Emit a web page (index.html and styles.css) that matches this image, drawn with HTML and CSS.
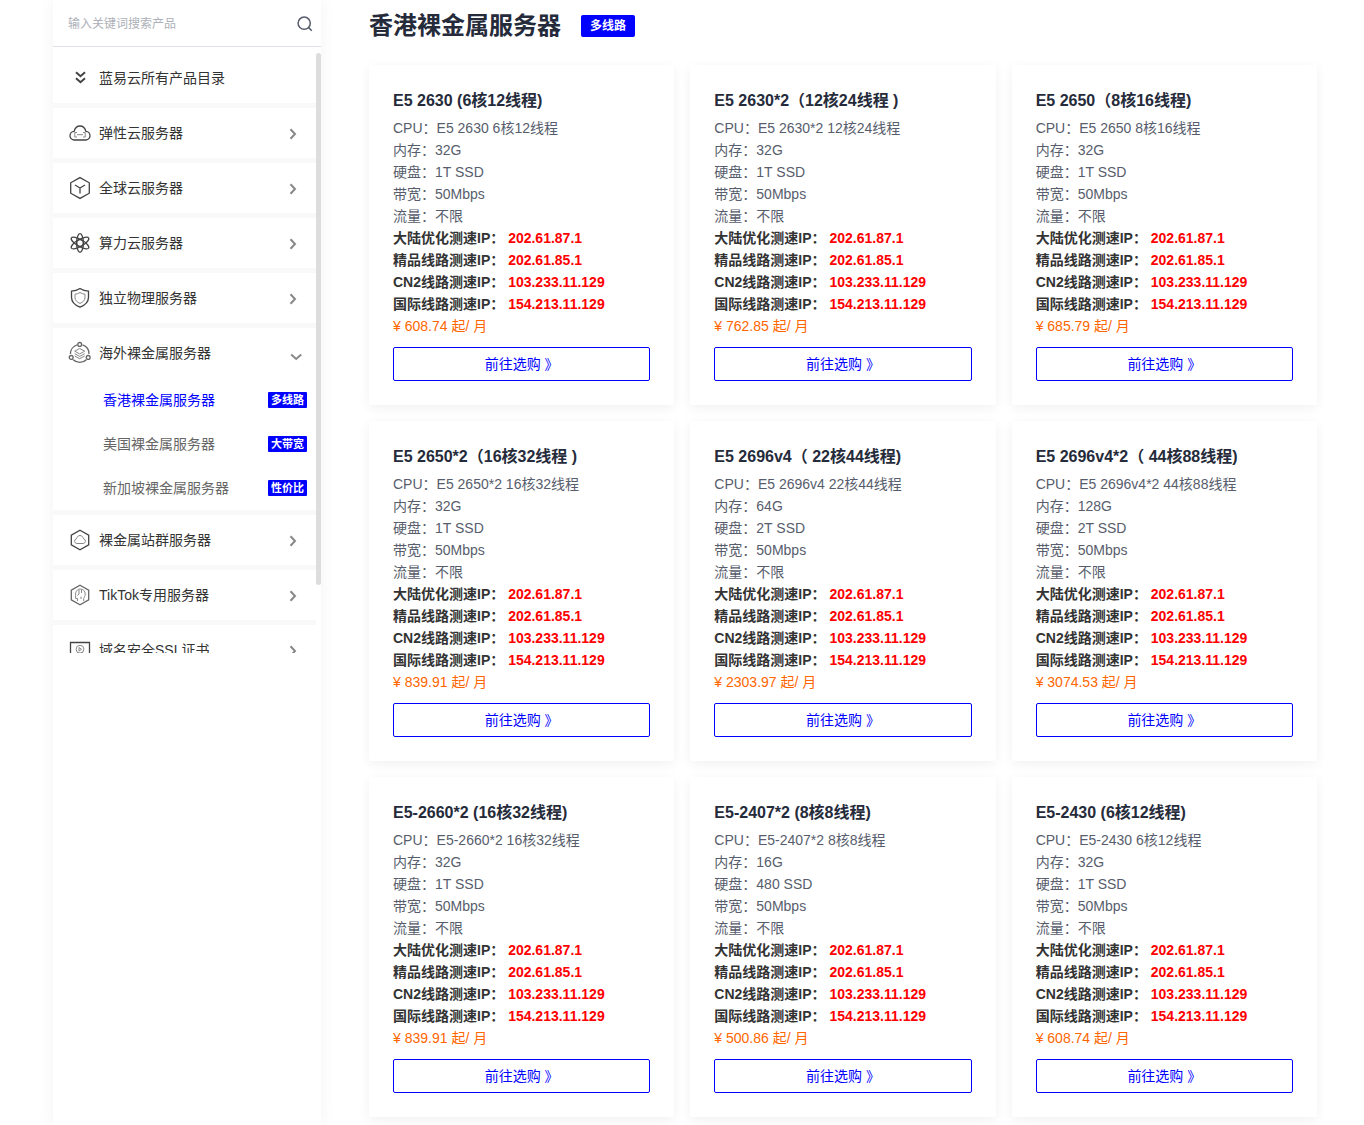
FILE: index.html
```html
<!DOCTYPE html>
<html lang="zh-CN">
<head>
<meta charset="utf-8">
<meta name="viewport" content="width=device-width, initial-scale=1">
<title>香港裸金属服务器</title>
<link rel="stylesheet" href="styles.css">
</head>
<body>
<div class="page">
  <aside class="sidebar">
    <form class="search">
      <input class="search-input" type="search" placeholder="输入关键词搜索产品" aria-label="输入关键词搜索产品">
      <button class="search-button" type="submit" aria-label="搜索">
        <svg width="16" height="16" viewBox="0 0 16 16"><circle cx="7.2" cy="7.2" r="6.1"/><path d="M11.6 11.6l3.2 3.2"/></svg>
      </button>
    </form>
    <div class="menu-frame">
    <nav class="menu">
      <div class="group">
        <a class="row" href="#">
          <svg class="icon icon-bold" viewBox="0 0 24 24"><path d="M8 6.2l4.5 4 4.5-4M8 12.2l4.5 4 4.5-4"/></svg>
          <span class="label">蓝易云所有产品目录</span>
        </a>
      </div>
      <div class="group">
        <button class="row" type="button">
          <svg class="icon" viewBox="0 0 24 24"><path d="M6.500 19a4.300 4.300 0 0 1-.4-8.600C7 7 9.200 5 12 5s5 2 5.900 5.400a4.300 4.300 0 0 1-.4 8.600z"/><path class="thin" d="M9 11.500H6.800V16H9M15 11.500h2.200V16H15M9 13.700h6"/></svg>
          <span class="label">弹性云服务器</span>
          <svg class="arrow" viewBox="0 0 20 20"><path d="M4.500 6.200L9 11l-4.500 4.800"/></svg>
        </button>
      </div>
      <div class="group">
        <button class="row" type="button">
          <svg class="icon" viewBox="0 0 24 24"><path d="M12 1.600l9.300 5.200v10.400L12 22.400l-9.300-5.200V6.800z"/><path d="M12 17.500V12L7 9M12 12l5-3"/></svg>
          <span class="label">全球云服务器</span>
          <svg class="arrow" viewBox="0 0 20 20"><path d="M4.500 6.200L9 11l-4.500 4.800"/></svg>
        </button>
      </div>
      <div class="group">
        <button class="row" type="button">
          <svg class="icon" viewBox="0 0 24 24"><ellipse cx="12" cy="12" rx="3.400" ry="9.300"/><ellipse cx="12" cy="12" rx="3.400" ry="10" transform="rotate(60 12 12)"/><ellipse cx="12" cy="12" rx="3.400" ry="10" transform="rotate(-60 12 12)"/><circle cx="12" cy="12" r="3.400"/></svg>
          <span class="label">算力云服务器</span>
          <svg class="arrow" viewBox="0 0 20 20"><path d="M4.500 6.200L9 11l-4.500 4.800"/></svg>
        </button>
      </div>
      <div class="group">
        <button class="row" type="button">
          <svg class="icon" viewBox="0 0 24 24"><path d="M12 2.500c2.600 1.700 5.400 2.500 8.500 2.700v6c0 4.600-3.200 7.800-8.500 10-5.300-2.200-8.500-5.400-8.500-10v-6C6.600 5 9.400 4.200 12 2.500z"/><path class="thin" d="M12 6.500c1.600 1 3.200 1.500 5 1.700v3.300c0 2.600-1.800 4.500-5 6-3.200-1.500-5-3.400-5-6V8.200c1.800-.2 3.400-.7 5-1.700z"/></svg>
          <span class="label">独立物理服务器</span>
          <svg class="arrow" viewBox="0 0 20 20"><path d="M4.500 6.200L9 11l-4.500 4.800"/></svg>
        </button>
      </div>
      <div class="group">
        <button class="row" type="button" aria-expanded="true">
          <svg class="icon" viewBox="0 0 24 24"><path class="mid" d="M9.200 3.800A9.500 9.500 0 0 0 2.400 13M14.500 3.800a9.500 9.500 0 0 1 6.500 9.200M5.200 18.800a9.500 9.500 0 0 0 13.200 0"/><circle class="mid" cx="11.700" cy="3.400" r="1.900"/><circle class="mid" cx="3.200" cy="16.400" r="1.900"/><circle class="mid" cx="20.200" cy="16.400" r="1.900"/><path class="thin" d="M11.700 7.500l5 2.700-5 2.700-5-2.700zM6.700 12.700l5 2.700 5-2.700M6.700 15l5 2.700 5-2.700"/></svg>
          <span class="label">海外裸金属服务器</span>
          <svg class="arrow" viewBox="0 0 20 20"><path d="M5.200 11.500l5 4.500 5-4.500"/></svg>
        </button>
        <a class="subrow current" href="#" aria-current="page">香港裸金属服务器<span class="tag">多线路</span></a>
        <a class="subrow" href="#">美国裸金属服务器<span class="tag">大带宽</span></a>
        <a class="subrow" href="#">新加坡裸金属服务器<span class="tag">性价比</span></a>
      </div>
      <div class="group">
        <button class="row" type="button">
          <svg class="icon" viewBox="0 0 24 24"><path d="M12 2.300l8.700 4.800v9.800L12 21.700l-8.700-4.800V7.100z"/><path class="thin" d="M8.800 15.500a2.400 2.400 0 0 1-.4-4.700C9 8.600 10.400 7.500 12 7.500s3 1.100 3.600 3.300a2.400 2.400 0 0 1-.4 4.700z"/></svg>
          <span class="label">裸金属站群服务器</span>
          <svg class="arrow" viewBox="0 0 20 20"><path d="M4.500 6.200L9 11l-4.500 4.800"/></svg>
        </button>
      </div>
      <div class="group">
        <button class="row" type="button">
          <svg class="icon" viewBox="0 0 24 24"><path class="mid" d="M12 2.300l8.700 4.800v9.800L12 21.700l-8.700-4.800V7.100z"/><path class="thin" d="M9.500 18v-2.500H7.600v-3.200C7.300 8.500 9.300 6 12.300 6s4.900 2.200 4.900 5c0 2.200-1 3-1.500 4.500V18M11 6.500V11l-1.500 1.500M13.500 6.500V10M13 13.500V16"/></svg>
          <span class="label">TikTok专用服务器</span>
          <svg class="arrow" viewBox="0 0 20 20"><path d="M4.500 6.200L9 11l-4.500 4.800"/></svg>
        </button>
      </div>
      <div class="group">
        <button class="row" type="button">
          <svg class="icon" viewBox="0 0 24 24"><path d="M2.500 4.500h19v14h-19z"/><circle class="thin" cx="12" cy="11.200" r="3.900"/><path class="thin" d="M11 9.500v3.600l2.500-1.800zM9.500 14.500V18M14.500 14.500V18"/></svg>
          <span class="label">域名安全SSL证书</span>
          <svg class="arrow" viewBox="0 0 20 20"><path d="M4.500 6.200L9 11l-4.500 4.800"/></svg>
        </button>
      </div>
    </nav>
    <div class="thumb"></div>
    </div>
  </aside>

  <main class="content">
    <header class="heading">
      <h1 class="title">香港裸金属服务器</h1>
      <span class="badge">多线路</span>
    </header>
    <div class="cards">
      <article class="card">
        <h2 class="card-title">E5 2630 (6核12线程)</h2>
        <ul class="specs"><li>CPU：E5 2630 6核12线程</li><li>内存：32G</li><li>硬盘：1T SSD</li><li>带宽：50Mbps</li><li>流量：不限</li></ul>
        <ul class="routes"><li>大陆优化测速IP： <span class="ip">202.61.87.1</span></li><li>精品线路测速IP： <span class="ip">202.61.85.1</span></li><li>CN2线路测速IP： <span class="ip">103.233.11.129</span></li><li>国际线路测速IP： <span class="ip">154.213.11.129</span></li></ul>
        <p class="price">¥ 608.74 起/ 月</p>
        <a class="buy" href="#">前往选购 》</a>
      </article>
      <article class="card">
        <h2 class="card-title">E5 2630*2（12核24线程 )</h2>
        <ul class="specs"><li>CPU：E5 2630*2 12核24线程</li><li>内存：32G</li><li>硬盘：1T SSD</li><li>带宽：50Mbps</li><li>流量：不限</li></ul>
        <ul class="routes"><li>大陆优化测速IP： <span class="ip">202.61.87.1</span></li><li>精品线路测速IP： <span class="ip">202.61.85.1</span></li><li>CN2线路测速IP： <span class="ip">103.233.11.129</span></li><li>国际线路测速IP： <span class="ip">154.213.11.129</span></li></ul>
        <p class="price">¥ 762.85 起/ 月</p>
        <a class="buy" href="#">前往选购 》</a>
      </article>
      <article class="card">
        <h2 class="card-title">E5 2650（8核16线程)</h2>
        <ul class="specs"><li>CPU：E5 2650 8核16线程</li><li>内存：32G</li><li>硬盘：1T SSD</li><li>带宽：50Mbps</li><li>流量：不限</li></ul>
        <ul class="routes"><li>大陆优化测速IP： <span class="ip">202.61.87.1</span></li><li>精品线路测速IP： <span class="ip">202.61.85.1</span></li><li>CN2线路测速IP： <span class="ip">103.233.11.129</span></li><li>国际线路测速IP： <span class="ip">154.213.11.129</span></li></ul>
        <p class="price">¥ 685.79 起/ 月</p>
        <a class="buy" href="#">前往选购 》</a>
      </article>
      <article class="card">
        <h2 class="card-title">E5 2650*2（16核32线程 )</h2>
        <ul class="specs"><li>CPU：E5 2650*2 16核32线程</li><li>内存：32G</li><li>硬盘：1T SSD</li><li>带宽：50Mbps</li><li>流量：不限</li></ul>
        <ul class="routes"><li>大陆优化测速IP： <span class="ip">202.61.87.1</span></li><li>精品线路测速IP： <span class="ip">202.61.85.1</span></li><li>CN2线路测速IP： <span class="ip">103.233.11.129</span></li><li>国际线路测速IP： <span class="ip">154.213.11.129</span></li></ul>
        <p class="price">¥ 839.91 起/ 月</p>
        <a class="buy" href="#">前往选购 》</a>
      </article>
      <article class="card">
        <h2 class="card-title">E5 2696v4（ 22核44线程)</h2>
        <ul class="specs"><li>CPU：E5 2696v4 22核44线程</li><li>内存：64G</li><li>硬盘：2T SSD</li><li>带宽：50Mbps</li><li>流量：不限</li></ul>
        <ul class="routes"><li>大陆优化测速IP： <span class="ip">202.61.87.1</span></li><li>精品线路测速IP： <span class="ip">202.61.85.1</span></li><li>CN2线路测速IP： <span class="ip">103.233.11.129</span></li><li>国际线路测速IP： <span class="ip">154.213.11.129</span></li></ul>
        <p class="price">¥ 2303.97 起/ 月</p>
        <a class="buy" href="#">前往选购 》</a>
      </article>
      <article class="card">
        <h2 class="card-title">E5 2696v4*2（ 44核88线程)</h2>
        <ul class="specs"><li>CPU：E5 2696v4*2 44核88线程</li><li>内存：128G</li><li>硬盘：2T SSD</li><li>带宽：50Mbps</li><li>流量：不限</li></ul>
        <ul class="routes"><li>大陆优化测速IP： <span class="ip">202.61.87.1</span></li><li>精品线路测速IP： <span class="ip">202.61.85.1</span></li><li>CN2线路测速IP： <span class="ip">103.233.11.129</span></li><li>国际线路测速IP： <span class="ip">154.213.11.129</span></li></ul>
        <p class="price">¥ 3074.53 起/ 月</p>
        <a class="buy" href="#">前往选购 》</a>
      </article>
      <article class="card">
        <h2 class="card-title">E5-2660*2 (16核32线程)</h2>
        <ul class="specs"><li>CPU：E5-2660*2 16核32线程</li><li>内存：32G</li><li>硬盘：1T SSD</li><li>带宽：50Mbps</li><li>流量：不限</li></ul>
        <ul class="routes"><li>大陆优化测速IP： <span class="ip">202.61.87.1</span></li><li>精品线路测速IP： <span class="ip">202.61.85.1</span></li><li>CN2线路测速IP： <span class="ip">103.233.11.129</span></li><li>国际线路测速IP： <span class="ip">154.213.11.129</span></li></ul>
        <p class="price">¥ 839.91 起/ 月</p>
        <a class="buy" href="#">前往选购 》</a>
      </article>
      <article class="card">
        <h2 class="card-title">E5-2407*2 (8核8线程)</h2>
        <ul class="specs"><li>CPU：E5-2407*2 8核8线程</li><li>内存：16G</li><li>硬盘：480 SSD</li><li>带宽：50Mbps</li><li>流量：不限</li></ul>
        <ul class="routes"><li>大陆优化测速IP： <span class="ip">202.61.87.1</span></li><li>精品线路测速IP： <span class="ip">202.61.85.1</span></li><li>CN2线路测速IP： <span class="ip">103.233.11.129</span></li><li>国际线路测速IP： <span class="ip">154.213.11.129</span></li></ul>
        <p class="price">¥ 500.86 起/ 月</p>
        <a class="buy" href="#">前往选购 》</a>
      </article>
      <article class="card">
        <h2 class="card-title">E5-2430 (6核12线程)</h2>
        <ul class="specs"><li>CPU：E5-2430 6核12线程</li><li>内存：32G</li><li>硬盘：1T SSD</li><li>带宽：50Mbps</li><li>流量：不限</li></ul>
        <ul class="routes"><li>大陆优化测速IP： <span class="ip">202.61.87.1</span></li><li>精品线路测速IP： <span class="ip">202.61.85.1</span></li><li>CN2线路测速IP： <span class="ip">103.233.11.129</span></li><li>国际线路测速IP： <span class="ip">154.213.11.129</span></li></ul>
        <p class="price">¥ 608.74 起/ 月</p>
        <a class="buy" href="#">前往选购 》</a>
      </article>
    </div>
  </main>
</div>
</body>
</html>
```

FILE: styles.css
```css
* {
  box-sizing: border-box;
}

body {
  margin: 0;
  background: #fff;
  color: #333;
  font: 14px/22px "Liberation Sans", "Noto Sans CJK SC", sans-serif;
}

h1, h2, p, ul {
  margin: 0;
  padding: 0;
}

ul {
  list-style: none;
}

a {
  color: inherit;
  text-decoration: none;
}

button {
  border: 0;
  padding: 0;
  background: none;
  color: inherit;
  font: inherit;
  text-align: left;
  cursor: pointer;
}

.page {
  display: flex;
  gap: 48px;
  min-height: 100vh;
  padding: 0 47px 0 53px;
}

/* Sidebar */
.sidebar {
  flex: 0 0 268px;
  background: #fff;
  box-shadow: 0 0 16px rgba(0, 0, 0, 0.05);
}

.search {
  display: flex;
  align-items: center;
  height: 47px;
  margin-bottom: 6px;
  padding: 1px 8px 0 15px;
  border-bottom: 1px solid #dfe1e6;
}

.search-input {
  flex: 1;
  min-width: 0;
  padding: 0;
  border: 0;
  outline: 0;
  background: none;
  color: #333;
  font: inherit;
  font-size: 12px;
}

.search-input::placeholder {
  color: #adb0b8;
}

.search-button {
  display: flex;
}

.search-button svg {
  fill: none;
  stroke: #575d6c;
  stroke-width: 1.5;
}

.menu-frame {
  position: relative;
  padding-right: 5px;
}

.menu {
  max-height: 600px;
  overflow-y: auto;
  scrollbar-width: none;
}

/* Overlay scrollbar of the menu */
.thumb {
  position: absolute;
  top: 0;
  right: 0;
  width: 5px;
  height: 532px;
  border-radius: 3px;
  background: #ddd;
}

.group {
  border-bottom: 5px solid #f9f9f9;
}

.group:last-child {
  margin-bottom: 50px;
}

.row {
  display: flex;
  align-items: center;
  width: 100%;
  height: 50px;
  padding: 0 10px 0 15px;
}

.icon {
  width: 24px;
  height: 24px;
  margin-right: 7px;
  fill: none;
  stroke: #444;
  stroke-width: 1.3;
}

.icon-bold {
  stroke-width: 2;
}

.icon .thin {
  stroke: #888;
  stroke-width: 1;
}

.icon .mid {
  stroke: #666;
}

.label {
  flex: 1;
}

.arrow {
  width: 20px;
  height: 20px;
  fill: none;
  stroke: #888;
  stroke-width: 2;
}

.subrow {
  display: flex;
  align-items: center;
  justify-content: space-between;
  height: 44px;
  padding: 0 9px 0 50px;
  color: #666;
}

.subrow.current {
  color: #00f;
}

.tag {
  padding: 0 3px;
  border-radius: 1px;
  background: #00f;
  color: #fff;
  font-size: 11px;
  font-weight: 700;
  line-height: 16px;
}

/* Product list */
.content {
  flex: 1;
  min-width: 0;
  padding-bottom: 8px;
}

.heading {
  display: flex;
  align-items: center;
  gap: 20px;
  padding: 10px 0 23px;
}

.title {
  color: #252b3a;
  font-size: 24px;
  line-height: 32px;
}

.badge {
  padding: 0 9px;
  border-radius: 2px;
  background: #00f;
  color: #fff;
  font-size: 12px;
  font-weight: 700;
}

.cards {
  display: grid;
  grid-template-columns: repeat(3, minmax(0, 1fr));
  gap: 16px;
}

.card {
  padding: 24px;
  border-radius: 2px;
  background: #fff;
  box-shadow: 0 3px 12px rgba(0, 0, 0, 0.06);
}

.card-title {
  margin-bottom: 4px;
  color: #252b3a;
  font-size: 16px;
  line-height: 24px;
}

.specs {
  color: #575d6c;
}

.routes {
  font-weight: 700;
}

.ip {
  color: #f00;
}

.price {
  margin-bottom: 10px;
  color: #f60;
}

.buy {
  display: block;
  border: 1px solid #00f;
  border-radius: 2px;
  color: #00f;
  line-height: 32px;
  text-align: center;
}
```
